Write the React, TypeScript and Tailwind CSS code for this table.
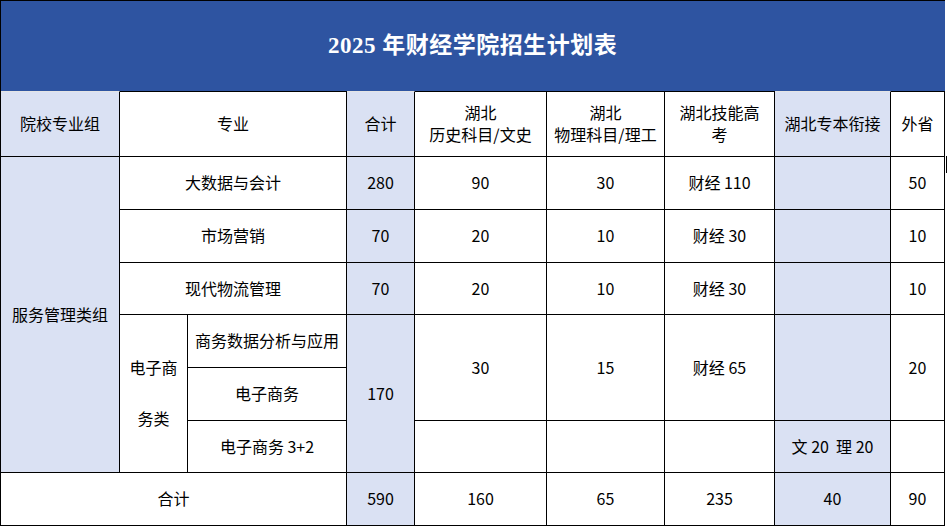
import React from "react";

const BLUE = "bg-[#dae1f3]";

function Cell({
  className = "",
  children,
}: {
  className?: string;
  children?: React.ReactNode;
}) {
  return (
    <div
      className={`flex items-center justify-center text-center border-r border-b border-black text-[16px] leading-[20px] text-black pb-[2px] ${className}`}
    >
      {children}
    </div>
  );
}

function Two({ a, b }: { a: string; b: string }) {
  return (
    <div className="flex flex-col items-center gap-[2px] leading-[20px]">
      <div>{a}</div>
      <div>{b}</div>
    </div>
  );
}

export default function App() {
  return (
    <div
      className="w-[947px] h-[527px] bg-white"
      style={{ fontFamily: '"Noto Sans CJK SC", "Noto Sans", sans-serif' }}
    >
      <div className="w-[945px] h-[91px] border-l border-t border-black bg-[#2e54a1] flex items-center justify-center pr-[1px]">
        <span
          className="text-white text-[23px] font-bold tracking-[0.5px]"
          style={{ fontFamily: '"Liberation Serif", "Noto Sans CJK SC", serif' }}
        >
          2025 年财经学院招生计划表
        </span>
      </div>
      <div className="relative w-[945px] grid grid-cols-[119px_68px_159px_68px_132px_118px_110px_116px_54px] grid-rows-[66px_53px_53px_52px_53px_53px_52px_53px] border-l border-black">
        {/* header */}
        <Cell className={`${BLUE} border-t border-t-[#e4e4e4]`}>院校专业组</Cell>
        <Cell className="col-span-2 border-t">专业</Cell>
        <Cell className={`${BLUE} border-t border-t-[#e4e4e4]`}>合计</Cell>
        <Cell className="border-t">
          <Two a="湖北" b="历史科目/文史" />
        </Cell>
        <Cell className="border-t">
          <Two a="湖北" b="物理科目/理工" />
        </Cell>
        <Cell className="border-t">
          <Two a="湖北技能高" b="考" />
        </Cell>
        <Cell className={`${BLUE} border-t border-t-[#e4e4e4]`}>湖北专本衔接</Cell>
        <Cell className="border-t">外省</Cell>

        {/* row 1 */}
        <Cell className={`${BLUE} row-span-6 justify-start pl-[11px]`}>服务管理类组</Cell>
        <Cell className="col-span-2">大数据与会计</Cell>
        <Cell className={BLUE}>280</Cell>
        <Cell>90</Cell>
        <Cell>30</Cell>
        <Cell>财经 110</Cell>
        <Cell className={BLUE} />
        <Cell>50</Cell>

        {/* row 2 */}
        <Cell className="col-span-2">市场营销</Cell>
        <Cell className={BLUE}>70</Cell>
        <Cell>20</Cell>
        <Cell>10</Cell>
        <Cell>财经 30</Cell>
        <Cell className={BLUE} />
        <Cell>10</Cell>

        {/* row 3 */}
        <Cell className="col-span-2">现代物流管理</Cell>
        <Cell className={BLUE}>70</Cell>
        <Cell>20</Cell>
        <Cell>10</Cell>
        <Cell>财经 30</Cell>
        <Cell className={BLUE} />
        <Cell>10</Cell>

        {/* row 4 */}
        <Cell className="row-span-3 flex-col leading-[51px]">
          <div>电子商</div>
          <div>务类</div>
        </Cell>
        <Cell>商务数据分析与应用</Cell>
        <Cell className={`${BLUE} row-span-3`}>170</Cell>
        <Cell className="row-span-2">30</Cell>
        <Cell className="row-span-2">15</Cell>
        <Cell className="row-span-2">财经 65</Cell>
        <Cell className={`${BLUE} row-span-2`} />
        <Cell className="row-span-2">20</Cell>

        {/* row 5 */}
        <Cell>电子商务</Cell>

        {/* row 6 */}
        <Cell>电子商务 3+2</Cell>
        <Cell />
        <Cell />
        <Cell />
        <Cell className={`${BLUE} whitespace-pre`}>{"文 20  理 20"}</Cell>
        <Cell />

        {/* total */}
        <Cell className="col-span-3">合计</Cell>
        <Cell className={BLUE}>590</Cell>
        <Cell>160</Cell>
        <Cell>65</Cell>
        <Cell>235</Cell>
        <Cell className={BLUE}>40</Cell>
        <Cell>90</Cell>

        <div className="absolute left-[945px] top-[65px] w-[2px] h-[17px] bg-black" />
      </div>
    </div>
  );
}
